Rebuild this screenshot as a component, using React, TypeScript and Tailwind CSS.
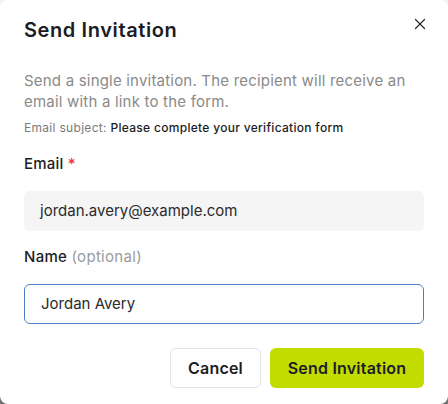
import { X } from "lucide-react";

const font = { fontFamily: "Inter, 'Noto Sans', sans-serif" };

export default function App() {
  return (
    <div className="h-[404px] w-[448px] bg-gradient-to-b from-[#f2f2f2] to-[#707070]" style={font}>
      <div className="relative h-[404px] w-[448px] rounded-lg bg-white px-6 pt-4">
        {/* Header */}
        <div className="flex h-7 items-center justify-between">
          <h2 className="text-[20px] font-semibold leading-7 tracking-[0.6px] text-[#1c1c24]">Send Invitation</h2>
          <button className="-mr-[5px] -mt-[12px] text-[#2a2a2a]">
            <X className="h-[18px] w-[18px]" strokeWidth={1.6} />
          </button>
        </div>

        <p className="mt-[26px] text-[15px] leading-[21px] tracking-[0.2px] text-[#8a8a8a]">
          Send a single invitation. The recipient will receive an email with a link to the form.
        </p>
        <p className="mt-2 text-[12px] leading-4 tracking-[0.3px] text-[#7a7a7a]">
          Email subject: <span className="font-medium text-[#1c1c24]">Please complete your verification form</span>
        </p>

        {/* Email field */}
        <label className="mt-[18px] block text-[15px] font-medium leading-5 tracking-[0.2px] text-[#1c1c24]">
          Email <span className="text-red-500">*</span>
        </label>
        <div className="mt-[17px] flex h-10 items-center rounded-md bg-[#f5f5f6] px-4 text-[15px] text-[#2a2a2a]">
          jordan.avery@example.com
        </div>

        {/* Name field */}
        <label className="mt-4 block text-[15px] font-medium leading-5 tracking-[0.3px] text-[#1c1c24]">
          Name <span className="font-normal text-[#9a9a9a]">(optional)</span>
        </label>
        <div className="mt-[17px] flex h-10 items-center rounded-md border border-[#4a7fc0] px-4 text-[15px] text-[#2a2a2a]">
          Jordan Avery
        </div>

        {/* Actions */}
        <div className="mt-6 flex justify-end gap-[9px]">
          <button className="h-10 w-[91px] rounded-md border border-[#e4e4e7] bg-white text-[16px] font-semibold tracking-[0.2px] text-[#1c1c24]">
            Cancel
          </button>
          <button className="h-10 w-[154px] rounded-md bg-[#c2dc00] text-[16px] font-semibold tracking-[0.2px] text-[#1c1c24]">
            Send Invitation
          </button>
        </div>
      </div>
    </div>
  );
}
